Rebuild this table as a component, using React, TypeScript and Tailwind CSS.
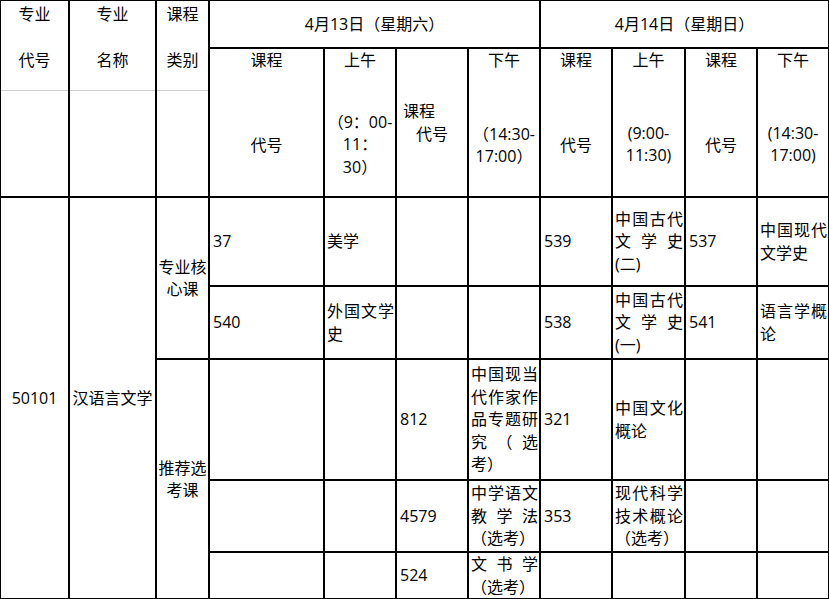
import React from 'react';

type Line = { t: string; spread?: boolean };

const font = { fontFamily: '"Open Sans", "Noto Sans CJK SC", sans-serif' };

// a body cell whose lines are set by hand; spread lines are justified edge to edge
const TextCell = ({ lines, className = '' }: { lines: Line[]; className?: string }) => (
  <div className={`bg-white flex flex-col justify-center pl-[2px] pr-[1px] ${className}`}>
    {lines.map((l, i) => (
      <div
        key={i}
        className={l.spread ? 'text-justify [text-align-last:justify] whitespace-nowrap' : 'text-left whitespace-nowrap'}
      >
        {l.t}
      </div>
    ))}
  </div>
);

const Blank = ({ className = '' }: { className?: string }) => <div className={`bg-white ${className}`} />;

const Code = ({ v, className = '' }: { v: string; className?: string }) => (
  <div className={`bg-white flex items-center pl-[3px] ${className}`}>{v}</div>
);

// header cells of the first three columns, with the thin grey rule inside
const HeadLeft = ({ a, b, col }: { a: string; b: string; col: string }) => (
  <div className={`bg-white flex flex-col row-span-2 ${col}`}>
    <div className="h-[90px] border-b border-[#d0d0d0] text-center pt-[2px]">
      <div>{a}</div>
      <div className="mt-[23px]">{b}</div>
    </div>
    <div className="flex-1" />
  </div>
);

const App = () => {
  return (
    <div
      className="w-[829px] h-[599px] bg-white text-black text-[16px] leading-[22.5px] [text-spacing-trim:space-all]"
      style={font}
    >
      <div className="grid grid-cols-[67px_85px_51px_113px_70px_70px_70px_70px_71px_70px_70px] grid-rows-[46px_147px_87px_71px_119px_70px_45px] gap-[2px] bg-black border border-black">
        {/* header */}
        <HeadLeft a="专业" b="代号" col="col-start-1" />
        <HeadLeft a="专业" b="名称" col="col-start-2" />
        <HeadLeft a="课程" b="类别" col="col-start-3" />
        <div className="bg-white col-start-4 col-span-4 row-start-1 flex items-center justify-center">4月13日（星期六）</div>
        <div className="bg-white col-start-8 col-span-4 row-start-1 flex items-center justify-center">4月14日（星期日）</div>

        <div className="bg-white col-start-4 row-start-2 text-center">
          <div>课程</div>
          <div className="mt-[62px]">代号</div>
        </div>
        <div className="bg-white col-start-5 row-start-2 text-center">
          <div>上午</div>
          <div className="mt-[39px]">
            <div>（9：00-</div>
            <div>11：</div>
            <div>30）</div>
          </div>
        </div>
        <div className="bg-white col-start-6 row-start-2 flex flex-col justify-center">
          <div className="pl-[6px]">课程</div>
          <div className="text-center">代号</div>
        </div>
        <div className="bg-white col-start-7 row-start-2 text-center">
          <div>下午</div>
          <div className="mt-[51px]">
            <div>（14:30-</div>
            <div>17:00）</div>
          </div>
        </div>
        <div className="bg-white col-start-8 row-start-2 text-center">
          <div>课程</div>
          <div className="mt-[62px]">代号</div>
        </div>
        <div className="bg-white col-start-9 row-start-2 text-center">
          <div>上午</div>
          <div className="mt-[50px]">
            <div>(9:00-</div>
            <div>11:30)</div>
          </div>
        </div>
        <div className="bg-white col-start-10 row-start-2 text-center">
          <div>课程</div>
          <div className="mt-[62px]">代号</div>
        </div>
        <div className="bg-white col-start-11 row-start-2 text-center">
          <div>下午</div>
          <div className="mt-[50px]">
            <div>(14:30-</div>
            <div>17:00)</div>
          </div>
        </div>

        {/* body */}
        <div className="bg-white col-start-1 row-start-3 row-span-5 flex items-center justify-center">50101</div>
        <div className="bg-white col-start-2 row-start-3 row-span-5 flex items-center justify-center">汉语言文学</div>
        <div className="bg-white col-start-3 row-start-3 row-span-2 flex flex-col items-center justify-center text-center">
          <div>专业核</div>
          <div>心课</div>
        </div>
        <div className="bg-white col-start-3 row-start-5 row-span-3 flex flex-col items-center justify-center text-center">
          <div>推荐选</div>
          <div>考课</div>
        </div>

        {/* row 1 */}
        <Code v="37" className="col-start-4 row-start-3 pl-[2px]" />
        <TextCell className="col-start-5 row-start-3" lines={[{ t: '美学' }]} />
        <Blank className="col-start-6 row-start-3" />
        <Blank className="col-start-7 row-start-3" />
        <Code v="539" className="col-start-8 row-start-3" />
        <TextCell
          className="col-start-9 row-start-3"
          lines={[{ t: '中国古代', spread: true }, { t: '文学史', spread: true }, { t: '(二)' }]}
        />
        <Code v="537" className="col-start-10 row-start-3" />
        <TextCell className="col-start-11 row-start-3" lines={[{ t: '中国现代', spread: true }, { t: '文学史' }]} />

        {/* row 2 */}
        <Code v="540" className="col-start-4 row-start-4 pl-[2px]" />
        <TextCell className="col-start-5 row-start-4" lines={[{ t: '外国文学', spread: true }, { t: '史' }]} />
        <Blank className="col-start-6 row-start-4" />
        <Blank className="col-start-7 row-start-4" />
        <Code v="538" className="col-start-8 row-start-4" />
        <TextCell
          className="col-start-9 row-start-4"
          lines={[{ t: '中国古代', spread: true }, { t: '文学史', spread: true }, { t: '(一)' }]}
        />
        <Code v="541" className="col-start-10 row-start-4" />
        <TextCell className="col-start-11 row-start-4" lines={[{ t: '语言学概', spread: true }, { t: '论' }]} />

        {/* row 3 */}
        <Blank className="col-start-4 row-start-5" />
        <Blank className="col-start-5 row-start-5" />
        <Code v="812" className="col-start-6 row-start-5 pl-[2px]" />
        <TextCell
          className="col-start-7 row-start-5"
          lines={[
            { t: '中国现当', spread: true },
            { t: '代作家作', spread: true },
            { t: '品专题研', spread: true },
            { t: '究（选', spread: true },
            { t: '考）' },
          ]}
        />
        <Code v="321" className="col-start-8 row-start-5" />
        <TextCell className="col-start-9 row-start-5" lines={[{ t: '中国文化', spread: true }, { t: '概论' }]} />
        <Blank className="col-start-10 row-start-5" />
        <Blank className="col-start-11 row-start-5" />

        {/* row 4 */}
        <Blank className="col-start-4 row-start-6" />
        <Blank className="col-start-5 row-start-6" />
        <Code v="4579" className="col-start-6 row-start-6 pl-[2px]" />
        <TextCell
          className="col-start-7 row-start-6"
          lines={[{ t: '中学语文', spread: true }, { t: '教学法', spread: true }, { t: '（选考）' }]}
        />
        <Code v="353" className="col-start-8 row-start-6" />
        <TextCell
          className="col-start-9 row-start-6"
          lines={[{ t: '现代科学', spread: true }, { t: '技术概论', spread: true }, { t: '（选考）' }]}
        />
        <Blank className="col-start-10 row-start-6" />
        <Blank className="col-start-11 row-start-6" />

        {/* row 5 */}
        <Blank className="col-start-4 row-start-7" />
        <Blank className="col-start-5 row-start-7" />
        <Code v="524" className="col-start-6 row-start-7 pl-[2px]" />
        <TextCell className="col-start-7 row-start-7" lines={[{ t: '文书学', spread: true }, { t: '（选考）' }]} />
        <Blank className="col-start-8 row-start-7" />
        <Blank className="col-start-9 row-start-7" />
        <Blank className="col-start-10 row-start-7" />
        <Blank className="col-start-11 row-start-7" />
      </div>
    </div>
  );
};

export default App;
